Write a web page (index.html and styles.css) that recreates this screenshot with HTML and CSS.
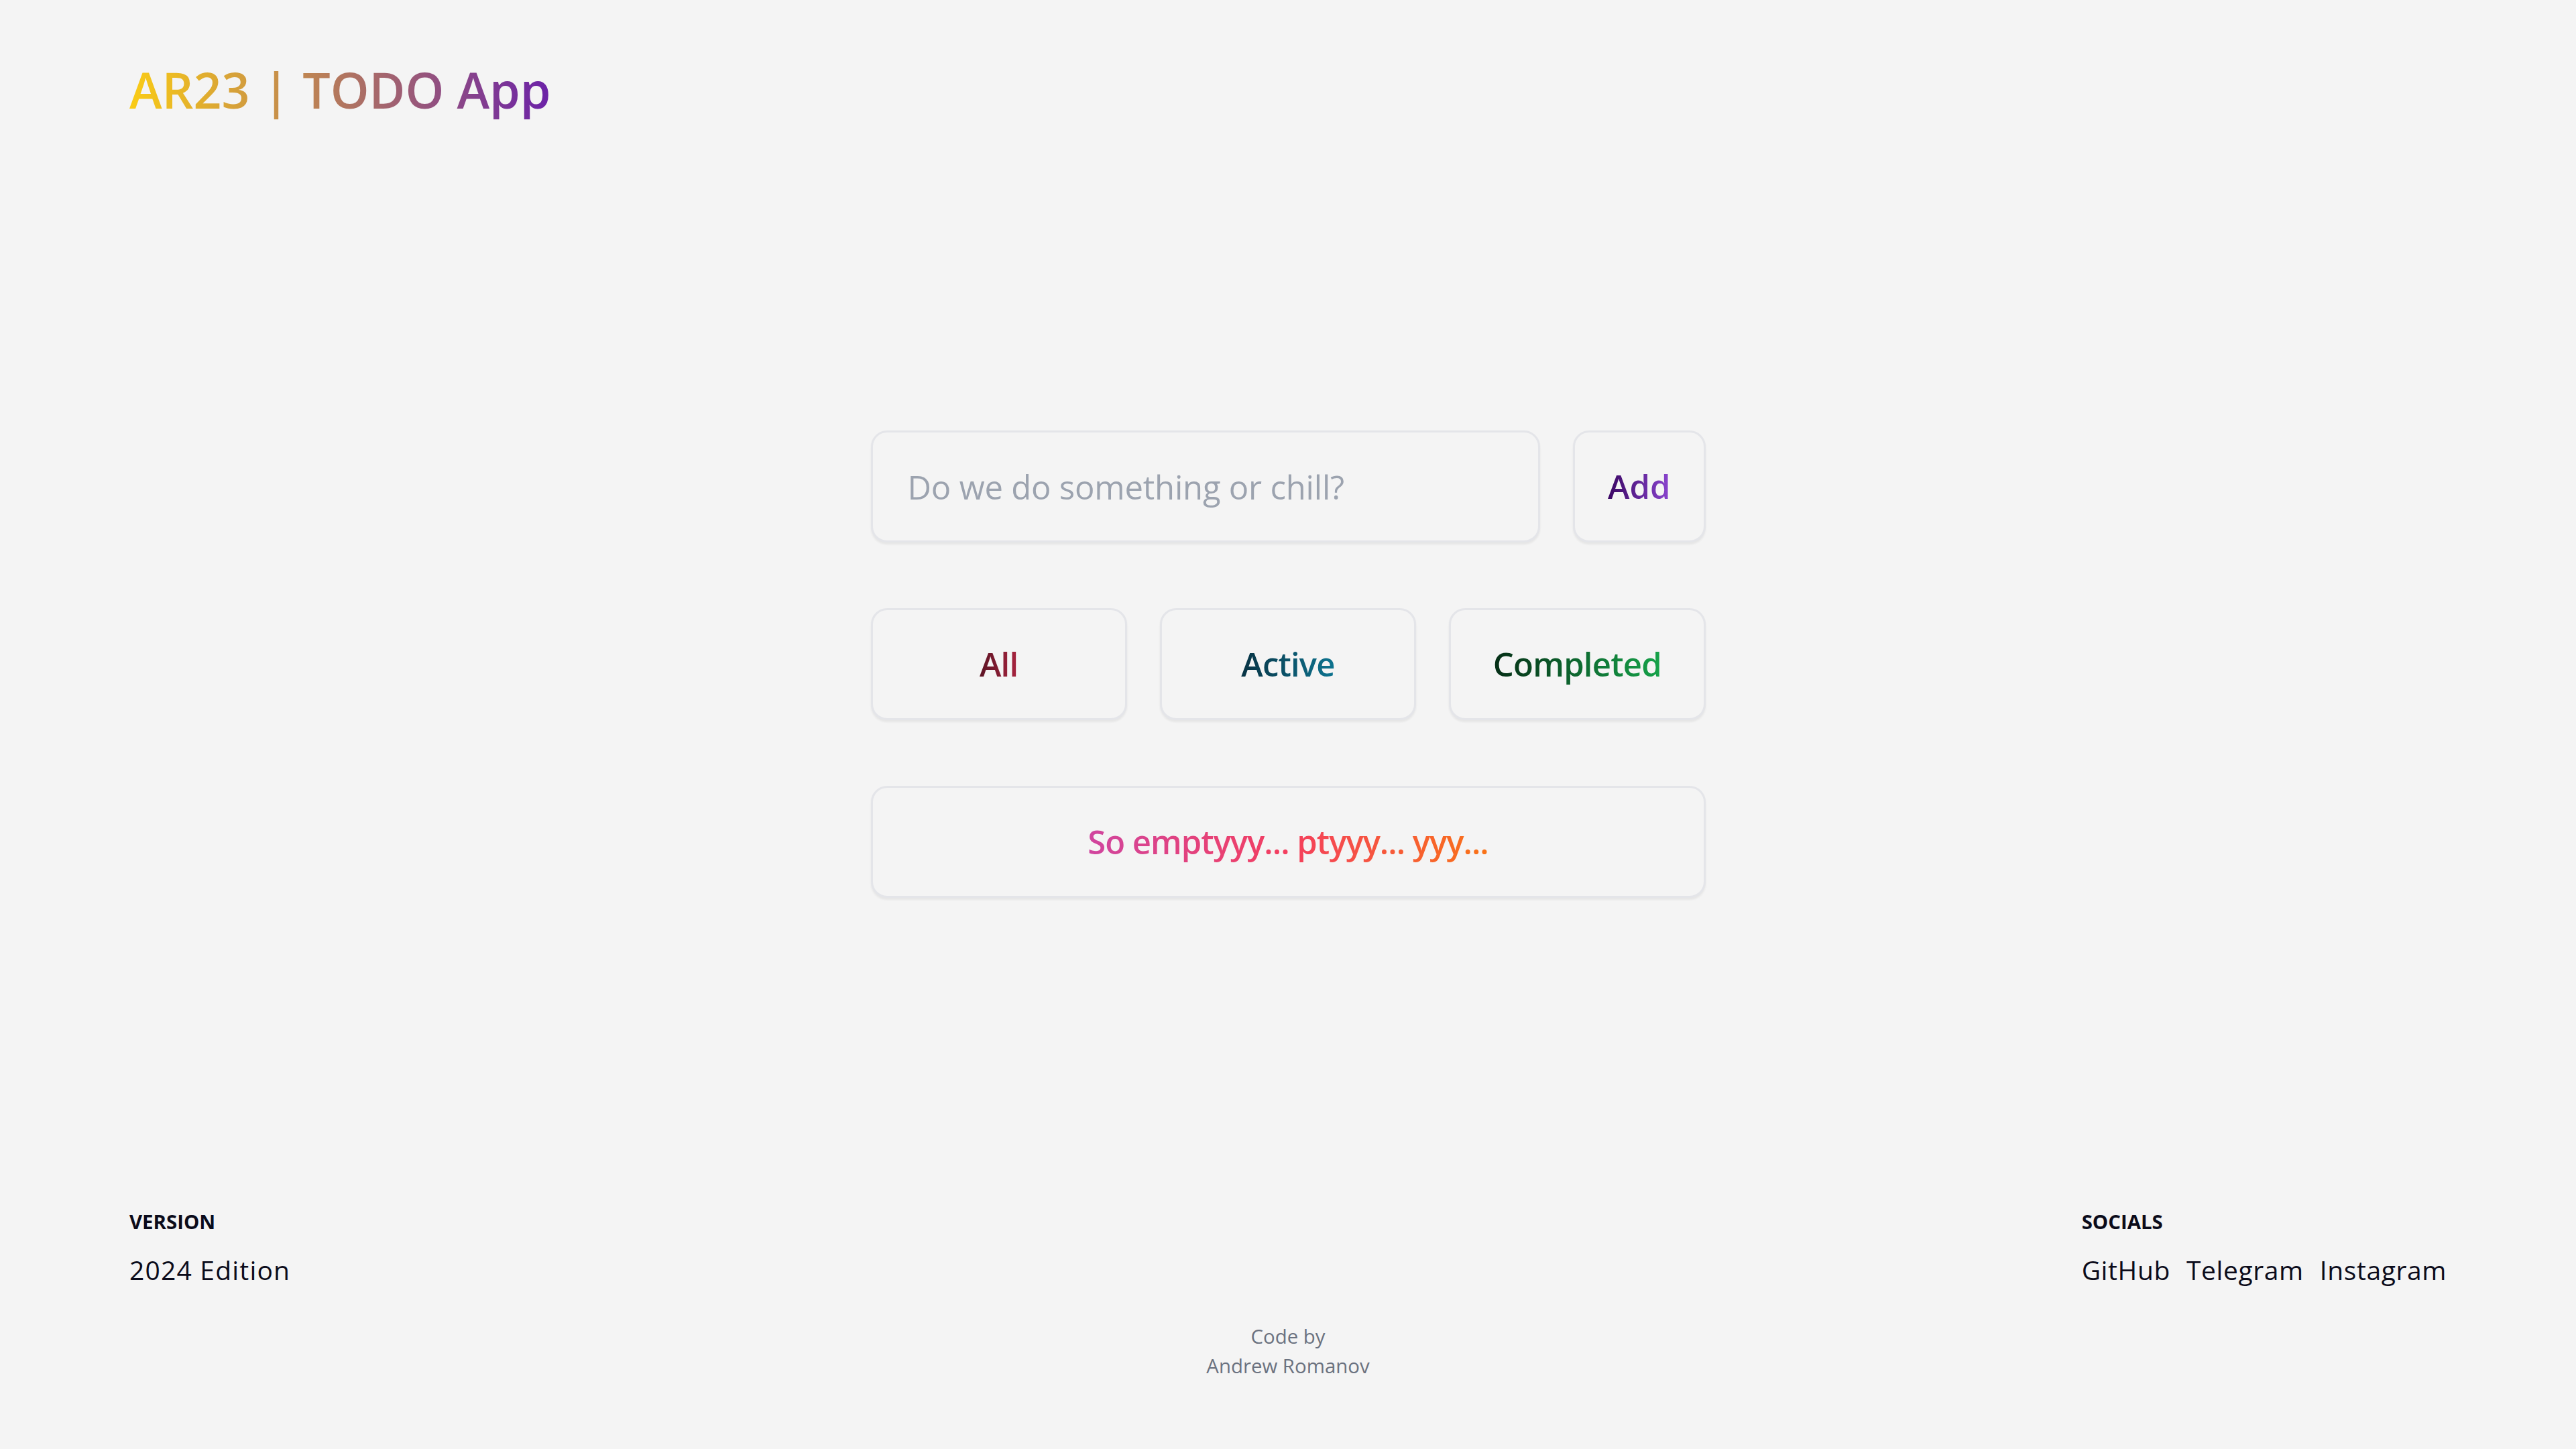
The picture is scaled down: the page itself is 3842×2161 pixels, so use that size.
FILE: index.html
```html
<!DOCTYPE html>
<html lang="en">
<head>
<meta charset="utf-8">
<title>AR23 | TODO App</title>
<link rel="stylesheet" href="styles.css">
</head>
<body>
<div class="page">
  <header class="header">
    <h1 class="title"><span class="grad grad-title">AR23 | TODO App</span></h1>
  </header>

  <main class="main">
    <div class="todo">
      <form class="add-row">
        <input class="box input" type="text" placeholder="Do we do something or chill?">
        <button class="box btn btn-add" type="button"><span class="grad grad-add">Add</span></button>
      </form>
      <div class="filters">
        <button class="box btn" type="button"><span class="grad grad-all">All</span></button>
        <button class="box btn" type="button"><span class="grad grad-active">Active</span></button>
        <button class="box btn" type="button"><span class="grad grad-completed">Completed</span></button>
      </div>
      <div class="box empty"><span class="grad grad-empty">So emptyyy... ptyyy... yyy...</span></div>
    </div>
  </main>

  <footer class="footer">
    <div class="footer-row">
      <div class="footer-col">
        <div class="footer-label">VERSION</div>
        <div class="footer-text">2024 Edition</div>
      </div>
      <div class="footer-col">
        <div class="footer-label">SOCIALS</div>
        <div class="footer-links">
          <a class="footer-link" href="#">GitHub</a>
          <a class="footer-link" href="#">Telegram</a>
          <a class="footer-link" href="#">Instagram</a>
        </div>
      </div>
    </div>
    <div class="credits">
      <div>Code by</div>
      <div>Andrew Romanov</div>
    </div>
  </footer>
</div>
</body>
</html>
```

FILE: styles.css
```css
* {
  box-sizing: border-box;
}

html, body {
  margin: 0;
  padding: 0;
}

body {
  background: #f4f4f4;
  font-family: "Open Sans", "Noto Sans", sans-serif;
  color: #0b0b1a;
}

.page {
  min-height: 100vh;
  display: flex;
  flex-direction: column;
}

.header {
  padding: 90px 193px 0;
}

.title {
  margin: 0;
  font-size: 73.5px;
  line-height: 88px;
  font-weight: 600;
}

.grad {
  display: inline-block;
  background-clip: text;
  -webkit-background-clip: text;
  -webkit-text-fill-color: transparent;
  color: transparent;
}

.grad-title {
  background-image: linear-gradient(90deg, #facc15 0%, #6b21a8 100%);
}

.grad-add {
  background-image: linear-gradient(90deg, #3b0764 0%, #8b45d0 100%);
}

.grad-all {
  background-image: linear-gradient(90deg, #5c1424 0%, #a8243f 100%);
}

.grad-active {
  background-image: linear-gradient(90deg, #083344 0%, #0e7490 100%);
}

.grad-completed {
  background-image: linear-gradient(90deg, #052e16 0%, #16a34a 100%);
}

.grad-empty {
  background-image: linear-gradient(90deg, #d0459f 0%, #f43f5e 50%, #f97316 100%);
}

.main {
  flex: 1;
  display: flex;
  align-items: center;
  justify-content: center;
}

.todo {
  width: 1245px;
  display: flex;
  flex-direction: column;
  gap: 98px;
}

.box {
  height: 167px;
  border: 3px solid #e4e5e9;
  border-radius: 24px;
  background: #f4f4f4;
  box-shadow: 0 3px 3px rgba(0, 0, 0, 0.06);
  font-family: "Open Sans", "Noto Sans", sans-serif;
  font-size: 49px;
  line-height: 69px;
}

.add-row {
  display: flex;
  gap: 49px;
  margin: 0;
}

.input {
  flex: 1;
  min-width: 0;
  padding: 0 52px;
  color: #374151;
  outline: none;
  font-weight: 400;
  letter-spacing: -0.2px;
}

.input::placeholder {
  color: #9ca3af;
}

.btn {
  display: flex;
  align-items: center;
  justify-content: center;
  padding: 0 49px;
  font-weight: 600;
  letter-spacing: -0.8px;
  cursor: pointer;
}

.btn-add {
  flex: none;
  letter-spacing: 0;
}

.filters {
  display: grid;
  grid-template-columns: repeat(3, 1fr);
  gap: 49px;
}

.empty {
  display: flex;
  align-items: center;
  justify-content: center;
  font-weight: 600;
  letter-spacing: -1px;
}

.footer {
  padding: 0 193px 102px;
}

.footer-row {
  display: flex;
  justify-content: space-between;
  align-items: flex-start;
}

.footer-col {
  display: flex;
  flex-direction: column;
  gap: 22px;
}

.footer-label {
  font-size: 29.4px;
  line-height: 39px;
  font-weight: 700;
  color: #0b0b1a;
}

.footer-text {
  font-size: 39px;
  line-height: 59px;
  letter-spacing: 1.2px;
  color: #0b0b1a;
}

.footer-links {
  display: flex;
  gap: 24px;
  font-size: 39px;
  line-height: 59px;
  letter-spacing: 0.6px;
}

.footer-link {
  color: #0b0b1a;
  text-decoration: none;
}

.credits {
  margin-top: 48px;
  text-align: center;
  font-size: 29.4px;
  line-height: 44px;
  color: #6b7280;
}
```
